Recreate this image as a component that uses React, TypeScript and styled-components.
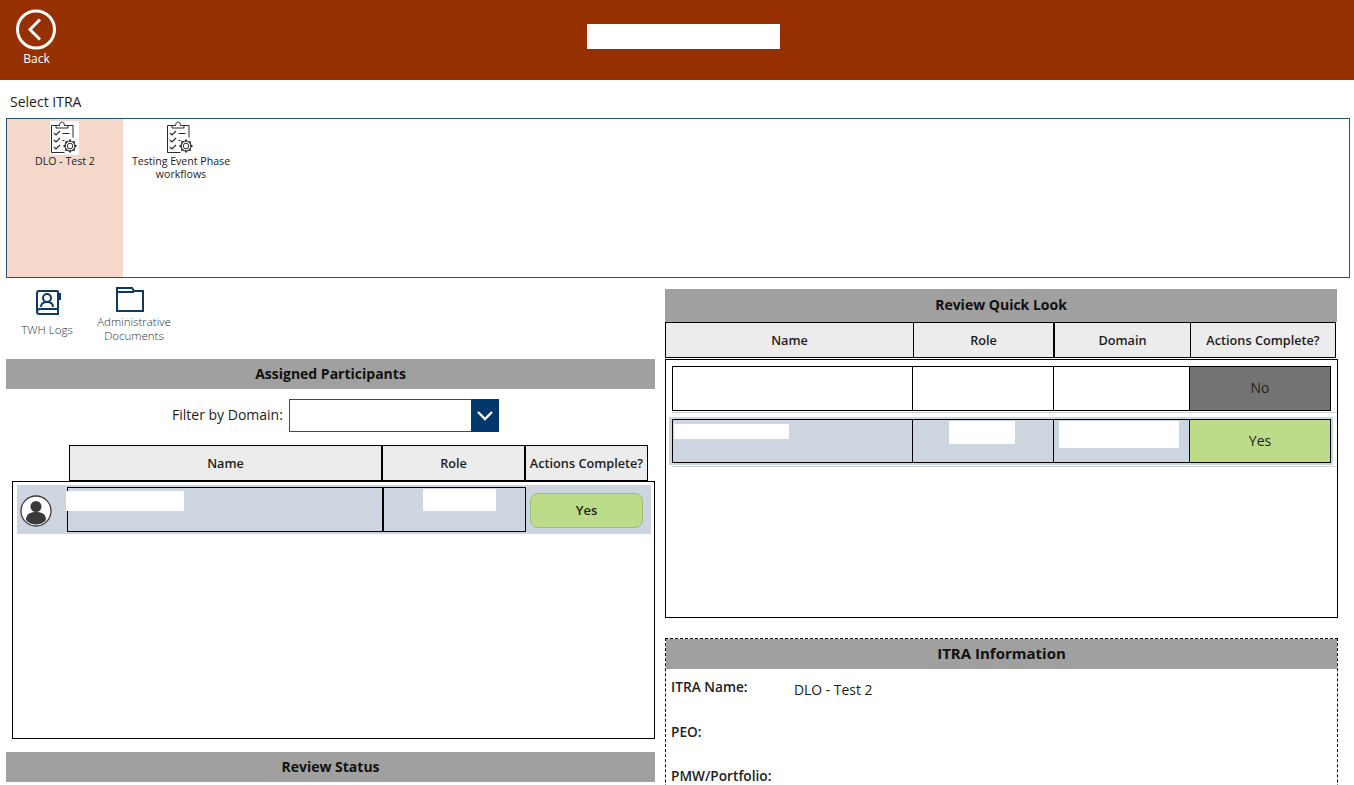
import React from 'react'
import styled, { createGlobalStyle } from 'styled-components'

const GlobalStyle = createGlobalStyle`
    html, body {
        margin: 0;
        padding: 0;
        background: #fff;
        font-family: "Open Sans", "Liberation Sans", sans-serif;
        color: #1c1c1c;
    }
    * {
        box-sizing: border-box;
    }
`

const Page = styled.div`
    width: 1354px;
    height: 785px;
    overflow: hidden;
`

const TopBar = styled.header`
    height: 80px;
    background: #963000;
    display: grid;
    grid-template-columns: 587px 193px;
    padding-top: 9px;
`

const BackButton = styled.button`
    width: 73px;
    height: 60px;
    background: none;
    border: none;
    padding: 0;
    color: #fff;
    font: inherit;
    font-size: 12px;
    line-height: 16px;
    display: flex;
    flex-direction: column;
    align-items: center;
    gap: 1px;
`

const TitleMask = styled.div`
    width: 193px;
    height: 25px;
    margin-top: 15px;
    background: #fff;
`

const SelectLabel = styled.div`
    height: 38px;
    padding: 12px 0 0 10px;
    font-size: 14px;
    line-height: 19px;
`

const Gallery = styled.div`
    margin-left: 6px;
    width: 1344px;
    height: 160px;
    border: 1px solid #1f5678;
    display: flex;
`

const Tile = styled.div<{ $selected?: boolean }>`
    width: 116px;
    height: 100%;
    background: ${({ $selected }) => ($selected ? '#f5d8ca' : '#fff')};
    display: flex;
    flex-direction: column;
    align-items: center;
    padding-top: 2px;
    font-size: 10.6px;
    line-height: 13px;
    text-align: center;
`

const TileIcon = styled.div`
    width: 29px;
    height: 34px;
    background: #fff;
    margin-left: -2px;
`

const Columns = styled.div`
    display: grid;
    grid-template-columns: 649px 673px;
    column-gap: 10px;
    padding-left: 6px;
`

const Column = styled.section`
    display: flex;
    flex-direction: column;
`

const Shortcuts = styled.div`
    height: 81px;
    display: flex;
    padding: 9px 0 0 14px;
`

const Shortcut = styled.div<{ $width: number }>`
    width: ${({ $width }) => $width}px;
    display: flex;
    flex-direction: column;
    align-items: center;
    font-size: 11.5px;
    font-weight: 300;
    line-height: 14px;
    color: #333;
    text-align: center;
`

const ShortcutIcon = styled.div<{ $height: number; $shift?: number }>`
    height: ${({ $height }) => $height}px;
    margin-right: ${({ $shift }) => $shift ?? 0}px;
`

const SectionHeader = styled.h2<{ $height?: number; $size?: number; $width?: string }>`
    margin: 0;
    height: ${({ $height }) => $height ?? 30}px;
    width: ${({ $width }) => $width ?? '100%'};
    flex: none;
    background: #a0a0a0;
    color: #111;
    font-size: ${({ $size }) => $size ?? 14}px;
    font-weight: 700;
    padding-bottom: 2px;
    display: flex;
    align-items: center;
    justify-content: center;
`

const FilterRow = styled.div`
    display: flex;
    align-items: center;
    gap: 6px;
    height: 33px;
    margin: 10px 0 13px 166px;
    font-size: 14px;
    line-height: 19px;
`

const FilterLabel = styled.span`
    margin-top: -2px;
`

const FilterSelect = styled.div`
    width: 210px;
    height: 33px;
    border: 1px solid #1f5678;
    display: flex;
    justify-content: flex-end;
`

const FilterArrow = styled.div`
    width: 28px;
    margin: -1px -1px -1px 0;
    background: #00386e;
    color: #fff;
    display: flex;
    align-items: center;
    justify-content: center;
`

const TableHead = styled.div<{ $columns: string; $indent?: number }>`
    display: grid;
    grid-template-columns: ${({ $columns }) => $columns};
    margin-left: ${({ $indent }) => $indent ?? 0}px;
    height: 36px;
    flex: none;
`

const HeadCell = styled.div<{ $first?: boolean; $heavy?: boolean }>`
    background: #ececec;
    border: 1px solid #000;
    border-left-width: ${({ $first }) => ($first ? 1 : 0)}px;
    border-right-width: ${({ $heavy }) => ($heavy ? 2 : 1)}px;
    font-size: 12.7px;
    font-weight: 600;
    display: flex;
    align-items: center;
    justify-content: center;
    white-space: nowrap;
`

const ListBox = styled.div<{ $height: number; $indent?: number; $width?: number; $top?: number }>`
    width: ${({ $width }) => $width ?? 643}px;
    margin-left: ${({ $indent }) => $indent ?? 0}px;
    margin-top: ${({ $top }) => $top ?? 0}px;
    height: ${({ $height }) => $height}px;
    flex: none;
    border: 1px solid #000;
`

const ParticipantRow = styled.div`
    margin: 3px 3px 0 4px;
    height: 49px;
    background: #cdd5e0;
    display: grid;
    grid-template-columns: 50px 316px 143px 125px;
    align-items: center;
`

const Avatar = styled.div`
    padding: 3px 0 0 3px;
    display: flex;
`

const ParticipantCell = styled.div`
    height: 45px;
    border: 1px solid #000;
    display: flex;
    align-items: flex-start;
`

const Mask = styled.div<{ $w: number; $h: number; $mt: number; $ml?: number }>`
    width: ${({ $w }) => $w}px;
    height: ${({ $h }) => $h}px;
    margin-top: ${({ $mt }) => $mt}px;
    margin-left: ${({ $ml }) => $ml ?? 0}px;
    background: #fff;
    flex: none;
`

const YesButton = styled.button`
    justify-self: end;
    width: 113px;
    height: 35px;
    margin: 2px 8px 0 0;
    padding: 0 0 2px;
    background: #bcdc8a;
    border: 1px solid #9dbb78;
    border-radius: 8px;
    color: #1c1c1c;
    font: inherit;
    font-size: 13px;
    font-weight: 600;
`

const Spacer = styled.div<{ $height: number }>`
    height: ${({ $height }) => $height}px;
    flex: none;
`

const LookRow = styled.div<{ $highlight?: boolean }>`
    margin: ${({ $highlight }) => ($highlight ? '4px 4px 0 3px' : '6px 6px 0 6px')};
    padding: ${({ $highlight }) => ($highlight ? '2px 2px 2px 3px' : '0')};
    background: ${({ $highlight }) => ($highlight ? '#cdd5e0' : 'transparent')};
    display: grid;
    grid-template-columns: 241px 141px 136px 141px;
    height: ${({ $highlight }) => ($highlight ? 48 : 45)}px;
`

const LookCell = styled.div<{ $status?: 'yes' | 'no'; $first?: boolean }>`
    border: 1px solid #000;
    border-left-width: ${({ $first }) => ($first ? 1 : 0)}px;
    background: ${({ $status }) =>
        $status === 'yes' ? '#bcdc8a' : $status === 'no' ? '#737373' : 'transparent'};
    color: #222;
    font-size: 14px;
    padding-bottom: ${({ $status }) => ($status ? 2 : 0)}px;
    display: flex;
    justify-content: ${({ $status }) => ($status ? 'center' : 'flex-start')};
    align-items: ${({ $status }) => ($status ? 'center' : 'flex-start')};
`

const LookDivider = styled.div`
    height: 1px;
    margin: 1px 0 0 6px;
    background: #cfcfcf;
`

const InfoPanel = styled.div`
    margin-top: 20px;
    width: 673px;
    height: 200px;
    flex: none;
    border: 1px dashed #000;
    border-bottom: none;
`

const InfoRow = styled.div<{ $first?: boolean }>`
    display: grid;
    grid-template-columns: 123px 1fr;
    height: ${({ $first }) => ($first ? 53 : 44)}px;
    padding: ${({ $first }) => ($first ? 8 : 0)}px 0 0 5px;
    font-size: 13.7px;
`

const InfoLabel = styled.div`
    font-weight: 600;
    line-height: 19px;
    color: #222;
`

const InfoValue = styled.div`
    line-height: 19px;
    padding-top: 3px;
    font-size: 13.9px;
`

const ChecklistIcon = () => (
    <svg width="29" height="34" viewBox="0 0 29 34" fill="none" stroke="#2b2b2b" strokeWidth="1">
        <path d="M6 4.500H1.500v27h13M18 4.500h5v12" />
        <path d="M6 7V4.500h3.500C10 2 10.500 1 12 1s2 1 2.500 3.500H18V7z" />
        <path d="M4 12l2 2 4-4M4 19l2 2 4-4M4 26l2 2 4-4" strokeWidth="1.200" />
        <path d="M12.500 12.500h7M12.500 19.500h2" />
        <circle cx="20" cy="25" r="2.800" />
        <circle cx="20" cy="25" r="5" strokeWidth="1.100" />
        <path
            d="M20 18.500v2M20 29.500v2M13.500 25h2M24.500 25h2M15.400 20.400l1.400 1.400M23.200 28.200l1.400 1.400M15.400 29.600l1.400-1.400M23.200 21.800l1.400-1.400"
            strokeWidth="1.800"
        />
    </svg>
)

const App = () => (
    <Page>
        <GlobalStyle />
        <TopBar>
            <BackButton>
                <svg width="41" height="41" viewBox="0 0 41 41" fill="none" stroke="#fff">
                    <circle cx="20" cy="20.500" r="18.500" strokeWidth="3" />
                    <path d="M24 10.500l-10 10 10 10" strokeWidth="3" />
                </svg>
                <span>Back</span>
            </BackButton>
            <TitleMask />
        </TopBar>

        <SelectLabel>Select ITRA</SelectLabel>
        <Gallery>
            <Tile $selected>
                <TileIcon>
                    <ChecklistIcon />
                </TileIcon>
                DLO - Test 2
            </Tile>
            <Tile>
                <TileIcon>
                    <ChecklistIcon />
                </TileIcon>
                Testing Event Phase
                <br />
                workflows
            </Tile>
        </Gallery>

        <Columns>
            <Column>
                <Shortcuts>
                    <Shortcut $width={54}>
                        <ShortcutIcon $height={36}>
                            <svg width="30" height="30" viewBox="0 0 30 30" fill="none" stroke="#0f3a5f" strokeWidth="2">
                                <path d="M5 25V6q0-2 2-2h18q1 0 1 1v22H7.500C5.500 27 5 26 5 25zq0-3 3-3h18" />
                                <path d="M26 7h2v5h-2" />
                                <circle cx="15" cy="11" r="4" />
                                <path d="M9 20q0-5 6-5t6 5" />
                            </svg>
                        </ShortcutIcon>
                        TWH Logs
                    </Shortcut>
                    <Shortcut $width={120}>
                        <ShortcutIcon $height={28} $shift={8}>
                            <svg width="28" height="25" viewBox="0 0 28 25" fill="none" stroke="#0f3a5f" strokeWidth="2">
                                <path d="M1 24V1h15l2 3h9v20zM1 5h17" />
                            </svg>
                        </ShortcutIcon>
                        Administrative
                        <br />
                        Documents
                    </Shortcut>
                </Shortcuts>

                <SectionHeader>Assigned Participants</SectionHeader>
                <FilterRow>
                    <FilterLabel>Filter by Domain:</FilterLabel>
                    <FilterSelect>
                        <FilterArrow>
                            <svg width="18" height="12" viewBox="0 0 18 12" fill="none" stroke="#fff" strokeWidth="2.400">
                                <path d="M2 2l7 7 7-7" />
                            </svg>
                        </FilterArrow>
                    </FilterSelect>
                </FilterRow>
                <TableHead $columns="314px 143px 122px" $indent={63}>
                    <HeadCell $first $heavy>Name</HeadCell>
                    <HeadCell $heavy>Role</HeadCell>
                    <HeadCell>Actions Complete?</HeadCell>
                </TableHead>
                <ListBox $height={258} $indent={6}>
                    <ParticipantRow>
                        <Avatar>
                            <svg width="32" height="32" viewBox="0 0 32 32">
                                <circle cx="16" cy="16" r="15" fill="#fff" stroke="#3a3a3a" strokeWidth="1.300" />
                                <circle cx="16" cy="11.500" r="5.500" fill="#3a3a3a" />
                                <path d="M6 25c0-6 4-8 10-8s10 2 10 8c-2.500 3-6 4.500-10 4.500S8.500 28 6 25z" fill="#3a3a3a" />
                            </svg>
                        </Avatar>
                        <ParticipantCell>
                            <Mask $w={118} $h={20} $mt={3} $ml={-2} />
                        </ParticipantCell>
                        <ParticipantCell>
                            <Mask $w={73} $h={22} $mt={1} $ml={39} />
                        </ParticipantCell>
                        <YesButton>Yes</YesButton>
                    </ParticipantRow>
                </ListBox>
                <Spacer $height={13} />
                <SectionHeader>Review Status</SectionHeader>
            </Column>

            <Column>
                <Spacer $height={11} />
                <SectionHeader $height={33} $width="672px">Review Quick Look</SectionHeader>
                <TableHead $columns="249px 141px 136px 145px">
                    <HeadCell $first>Name</HeadCell>
                    <HeadCell $heavy>Role</HeadCell>
                    <HeadCell>Domain</HeadCell>
                    <HeadCell>Actions Complete?</HeadCell>
                </TableHead>
                <ListBox $height={259} $width={673} $top={1}>
                    <LookRow>
                        <LookCell $first />
                        <LookCell />
                        <LookCell />
                        <LookCell $status="no">No</LookCell>
                    </LookRow>
                    <LookDivider />
                    <LookRow $highlight>
                        <LookCell $first>
                            <Mask $w={115} $h={15} $mt={4} $ml={1} />
                        </LookCell>
                        <LookCell>
                            <Mask $w={66} $h={23} $mt={1} $ml={36} />
                        </LookCell>
                        <LookCell>
                            <Mask $w={120} $h={27} $mt={1} $ml={5} />
                        </LookCell>
                        <LookCell $status="yes">Yes</LookCell>
                    </LookRow>
                    <LookDivider />
                </ListBox>

                <InfoPanel>
                    <SectionHeader $size={15}>ITRA Information</SectionHeader>
                    <InfoRow $first>
                        <InfoLabel>ITRA Name:</InfoLabel>
                        <InfoValue>DLO - Test 2</InfoValue>
                    </InfoRow>
                    <InfoRow>
                        <InfoLabel>PEO:</InfoLabel>
                    </InfoRow>
                    <InfoRow>
                        <InfoLabel>PMW/Portfolio:</InfoLabel>
                    </InfoRow>
                </InfoPanel>
            </Column>
        </Columns>
    </Page>
)

export default App
